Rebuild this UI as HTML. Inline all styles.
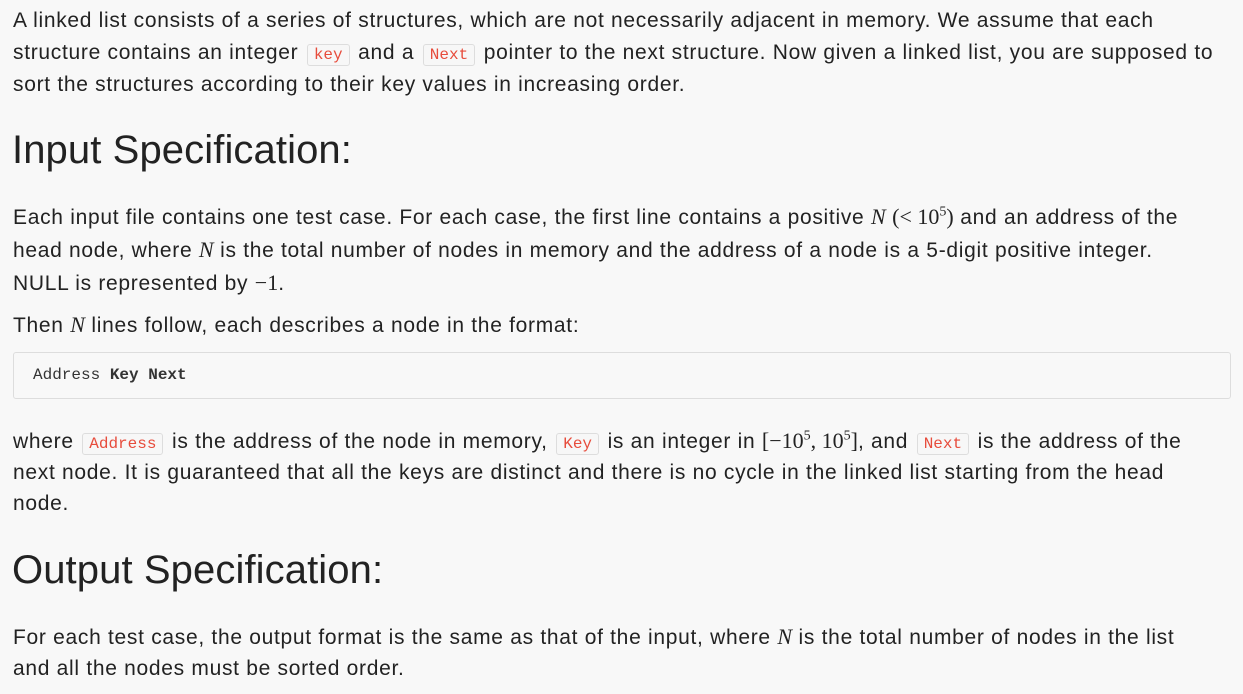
<!DOCTYPE html>
<html><head><meta charset="utf-8"><style>
body{margin:0;background:#f8f8f8;width:1243px;height:694px;overflow:hidden;font-family:"Liberation Sans","Noto Sans CJK SC",sans-serif;color:#222;}
.l{position:absolute;left:13px;font-size:21px;letter-spacing:0.7px;line-height:32px;white-space:nowrap;}
h2{position:absolute;left:12px;margin:0;font-weight:normal;font-size:40px;letter-spacing:0.1px;line-height:48px;white-space:nowrap;color:#222}
code{font-family:"Liberation Mono",monospace;font-size:16px;letter-spacing:0;color:#e74c3c;background:#f7f7f7;border:1px solid #ddd;border-radius:3px;padding:1px 6px;margin:0 2px;}
.m{font-family:"Liberation Serif",serif;font-size:22px;letter-spacing:0}
.i{font-style:italic}
sup{font-size:14px;line-height:0}
.pre{position:absolute;left:13px;top:352px;width:1216px;height:45px;border:1px solid #ddd;border-radius:3px;background:#f8f8f8;font-family:"Liberation Mono",monospace;font-size:16px;line-height:45px;color:#333;box-sizing:content-box}
.pre span{margin-left:19px}
</style></head><body>
<div class="l" style="top:5px">A linked list consists of a series of structures, which are not necessarily adjacent in memory. We assume that each</div>
<div class="l" style="top:37px">structure contains an integer <code>key</code> and a <code>Next</code> pointer to the next structure. Now given a linked list, you are supposed to</div>
<div class="l" style="top:69px">sort the structures according to their key values in increasing order.</div>
<h2 style="top:126px">Input Specification:</h2>
<div class="l" style="top:201px">Each input file contains one test case. For each case, the first line contains a positive <span class="m i">N</span> <span class="m">(&lt; 10<sup>5</sup>)</span> and an address of the</div>
<div class="l" style="top:234px">head node, where <span class="m i">N</span> is the total number of nodes in memory and the address of a node is a 5-digit positive integer.</div>
<div class="l" style="top:267px">NULL is represented by <span class="m">−1</span>.</div>
<div class="l" style="top:309px">Then <span class="m i">N</span> lines follow, each describes a node in the format:</div>
<div class="pre"><span>Address <b>Key Next</b></span></div>
<div class="l" style="top:425px">where <code>Address</code> is the address of the node in memory, <code>Key</code> is an integer in <span class="m">[−10<sup>5</sup>, 10<sup>5</sup>]</span>, and <code>Next</code> is the address of the</div>
<div class="l" style="top:457px">next node. It is guaranteed that all the keys are distinct and there is no cycle in the linked list starting from the head</div>
<div class="l" style="top:488px">node.</div>
<h2 style="top:546px">Output Specification:</h2>
<div class="l" style="top:621px">For each test case, the output format is the same as that of the input, where <span class="m i">N</span> is the total number of nodes in the list</div>
<div class="l" style="top:653px">and all the nodes must be sorted order.</div>
</body></html>
